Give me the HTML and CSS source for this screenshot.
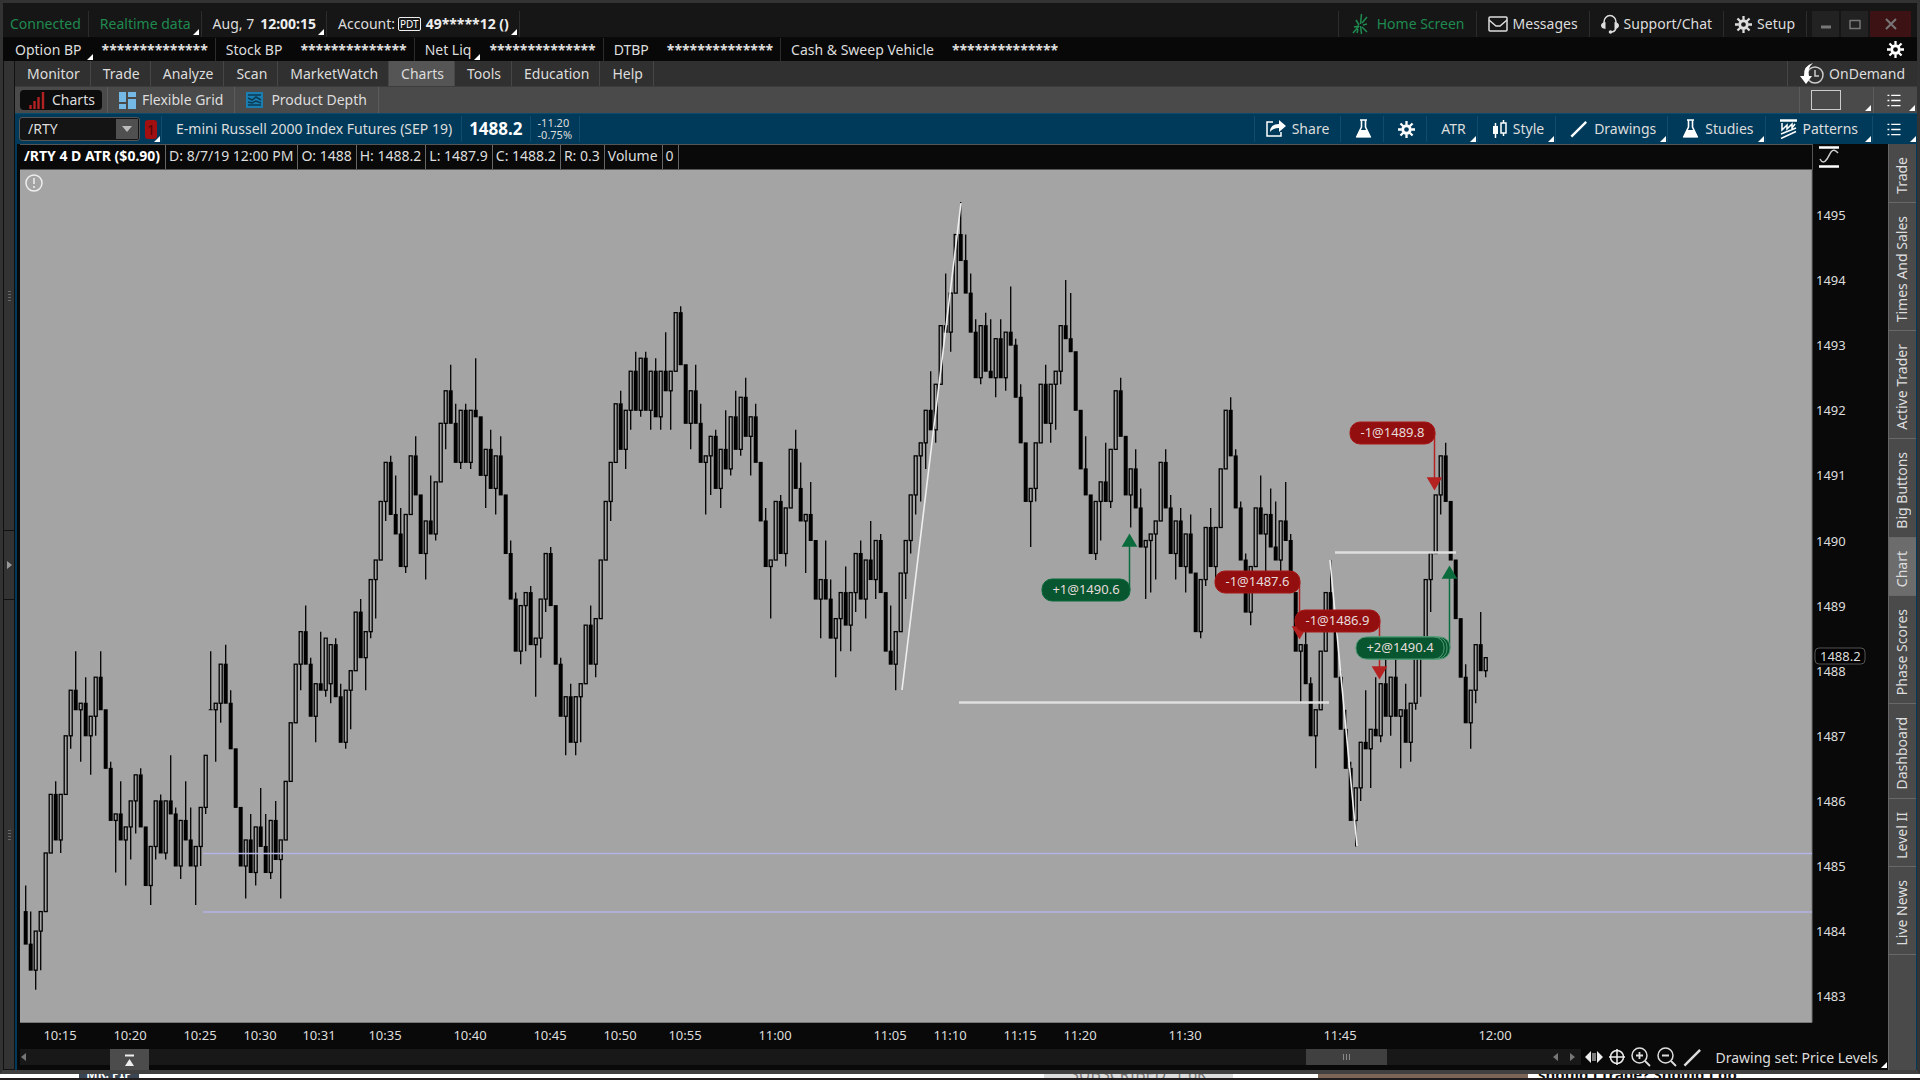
FILE: index.html
```html
<!DOCTYPE html>
<html lang="en">
<head>
    <meta charset="UTF-8">
    <meta name="viewport" content="width=device-width, initial-scale=1.0">
    <title>/RTY Charts</title>
    <link rel="stylesheet" href="styles.css">
</head>
<body>
    <svg class="sprite" aria-hidden="true">
        <symbol id="gear" viewBox="0 0 18 18">
            <circle cx="9" cy="9" r="4" fill="none" stroke="currentColor" stroke-width="3"/>
            <path d="M9 0v4M9 14v4M0 9h4M14 9h4M2.6 2.6l3 3M12.4 12.4l3 3M15.4 2.6l-3 3M5.6 12.4l-3 3" stroke="currentColor" stroke-width="2.4"/>
        </symbol>
        <symbol id="flask" viewBox="0 0 17 20">
            <path d="M5 1h7M6.5 1v7L2 17.5h13L10.5 8V1" fill="none" stroke="currentColor" stroke-width="1.6"/>
            <path d="M5 11h7l4 7.5H1z" fill="currentColor"/>
        </symbol>
        <symbol id="list" viewBox="0 0 14 14">
            <path d="M0 1.5h2M4 1.5h10M0 7h2M4 7h10M0 12.5h2M4 12.5h10" stroke="currentColor" stroke-width="1.5"/>
        </symbol>
        <symbol id="pencil" viewBox="0 0 20 20">
            <path d="M1.5 18.5L18 2" stroke="currentColor" stroke-width="2.6"/>
        </symbol>
    </svg>

    <div class="window">
        <header class="titlebar">
            <span class="status online">Connected</span>
            <button class="status online corner">Realtime data</button>
            <button class="status corner">Aug, 7 <b class="time">12:00:15</b></button>
            <button class="status corner">Account: <span class="pdt">PDT</span> <b>49*****12 ()</b></button>
            <nav class="window-links">
                <a href="#" class="link online">
                    <svg width="18" height="20" viewBox="0 0 18 20"><path d="M8.5 10L9.5 0M10 9l5-6M11 11l4-1M10 13l5 5M8.5 12l1 8M7 12l-6 7M7 11L4 6M7 12l-5 1M6 15l-1 4" stroke="currentColor" stroke-width="1.5"/></svg>
                    Home Screen
                </a>
                <a href="#" class="link">
                    <svg width="20" height="16" viewBox="0 0 20 16"><rect x="1" y="1" width="18" height="14" rx="1" fill="none" stroke="currentColor" stroke-width="1.5"/><path d="M1 4l7 6h4l7-6" fill="none" stroke="currentColor" stroke-width="1.5"/></svg>
                    Messages
                </a>
                <a href="#" class="link">
                    <svg width="18" height="20" viewBox="0 0 18 20"><path d="M3 14V8a6 6.5 0 0 1 12 0v6q-1 4-5 4" fill="none" stroke="currentColor" stroke-width="1.5"/><path d="M4.5 8v7Q0 14.5 0 11.5T4.5 8zM13.5 8v7q4.5-.5 4.5-3.5T13.5 8z" fill="currentColor"/><circle cx="9.5" cy="18" r="1.8" fill="currentColor"/></svg>
                    Support/Chat
                </a>
                <a href="#" class="link">
                    <svg width="17" height="17"><use href="#gear"/></svg>
                    Setup
                </a>
            </nav>
            <div class="window-buttons">
                <button aria-label="Minimize"><svg width="12" height="12" viewBox="0 0 12 12"><path d="M1 9h10" stroke="currentColor" stroke-width="3"/></svg></button>
                <button aria-label="Maximize"><svg width="12" height="12" viewBox="0 0 12 12"><path d="M1 2.5h10M1 2v8.500h10V2" fill="none" stroke="currentColor" stroke-width="1.5"/></svg></button>
                <button class="close" aria-label="Close"><svg width="12" height="12" viewBox="0 0 12 12"><path d="M1 1l10 10M11 1L1 11" stroke="currentColor" stroke-width="2"/></svg></button>
            </div>
        </header>

        <div class="balances">
            <div class="balance"><span class="corner label">Option BP</span><b>**************</b></div>
            <div class="balance"><span class="label">Stock BP</span><b>**************</b></div>
            <div class="balance"><span class="corner label">Net Liq</span><b>**************</b></div>
            <div class="balance"><span class="label">DTBP</span><b>**************</b></div>
            <div class="balance"><span class="label">Cash &amp; Sweep Vehicle</span><b>**************</b></div>
            <button class="balance-setup" aria-label="Account setup"><svg width="17" height="17"><use href="#gear"/></svg></button>
        </div>

        <div class="workspace">
            <aside class="gutter">
                <span class="grip"></span>
                <button aria-label="Show left panel"><svg width="5" height="8" viewBox="0 0 5 8"><path d="M0 0l5 4-5 4z" fill="#999"/></svg></button>
                <span class="grip"></span>
            </aside>

            <main class="main">
                <nav class="tabs">
                    <a href="#">Monitor</a>
                    <a href="#">Trade</a>
                    <a href="#">Analyze</a>
                    <a href="#">Scan</a>
                    <a href="#">MarketWatch</a>
                    <a href="#" class="active">Charts</a>
                    <a href="#">Tools</a>
                    <a href="#">Education</a>
                    <a href="#">Help</a>
                    <a href="#" class="ondemand">
                        <svg width="24" height="22" viewBox="0 0 24 22"><circle cx="15" cy="12" r="8" fill="none" stroke="#ccc" stroke-width="1.5"/><path d="M15 7v6h4" fill="none" stroke="#ccc" stroke-width="1.5"/><path d="M13 0Q3 3 4 13H0l6 8 6-8H9Q7 5 13 0z" fill="#fff"/></svg>
                        OnDemand
                    </a>
                </nav>

                <nav class="subtabs">
                    <a href="#" class="sub first">
                        <span class="pill-tab">
                            <svg width="17" height="17" viewBox="0 0 17 17"><path d="M1.5 17v-4M5.5 17V9M9.5 17V5M14 17V0" stroke="#b22222" stroke-width="2.4"/></svg>
                            Charts
                        </span>
                    </a>
                    <a href="#" class="sub">
                        <svg width="17" height="17" viewBox="0 0 17 17" fill="#74b9e6"><path d="M0 0h7v10H0zM0 12h7v5H0zM9 0h8v5H9zM9 7h8v10H9z"/></svg>
                        Flexible Grid
                    </a>
                    <a href="#" class="sub depth">
                        <svg width="17" height="16" viewBox="0 0 17 16"><path d="M0 0h17v16H0z" fill="#1a7fb0"/><path d="M2 3h13M2 6l4 2 4-3 5 3M2 10l4 1 4-2 5 2M2 13h13" fill="none" stroke="#0b3a55" stroke-width="1.5"/></svg>
                        Product Depth
                    </a>
                    <button class="sub grid-pick corner" aria-label="Grid layout"><span class="grid-box"></span></button>
                    <button class="sub menu corner" aria-label="Grid menu"><svg width="14" height="13"><use href="#list"/></svg></button>
                </nav>

                <div class="toolbar">
                    <div class="symbol">
                        <input type="text" value="/RTY" aria-label="Symbol">
                        <button aria-label="Symbol list"><svg width="10" height="6" viewBox="0 0 10 6"><path d="M0 0h10L5 6z" fill="#bbb"/></svg></button>
                    </div>
                    <button class="link-group corner" aria-label="Link group 1"><span>1</span></button>
                    <span class="cell name">E-mini Russell 2000 Index Futures (SEP 19)</span>
                    <b class="cell last">1488.2</b>
                    <span class="cell change"><span>-11.20</span><span>-0.75%</span></span>
                    <div class="tools">
                        <button class="tool share">
                            <svg width="20" height="18" viewBox="0 0 20 18"><path d="M7 2H1v14h14v-4" fill="none" stroke="currentColor" stroke-width="1.5"/><path d="M4 12q0-8 9-8V0l7 6-7 6V8Q7 8 4 12z" fill="currentColor"/></svg>
                            Share
                        </button>
                        <button class="tool" aria-label="Study editor"><svg width="17" height="20"><use href="#flask"/></svg></button>
                        <button class="tool" aria-label="Chart settings"><svg width="17" height="17"><use href="#gear"/></svg></button>
                        <button class="tool corner">ATR</button>
                        <button class="tool corner">
                            <svg width="15" height="18" viewBox="0 0 15 18"><path d="M3.5 3v15M11.5 0v3M11.5 13v3" stroke="currentColor" stroke-width="1.5"/><path d="M1 6h5v8H1z" fill="currentColor"/><rect x="9" y="3" width="5" height="10" fill="none" stroke="currentColor" stroke-width="1.5"/></svg>
                            Style
                        </button>
                        <button class="tool corner"><svg width="18" height="20"><use href="#pencil"/></svg>Drawings</button>
                        <button class="tool corner"><svg width="17" height="20"><use href="#flask"/></svg>Studies</button>
                        <button class="tool patterns corner">
                            <svg width="17" height="20" viewBox="0 0 17 20"><path d="M0 1.5h17" stroke="currentColor" stroke-width="2.5"/><path d="M2 4v7l5-5v4l5-5v4l3-4M1 15L16 9M1 19.500l15-7" fill="none" stroke="currentColor" stroke-width="1.5"/></svg>
                            Patterns
                        </button>
                        <button class="tool menu corner" aria-label="Chart menu"><svg width="14" height="13"><use href="#list"/></svg></button>
                    </div>
                </div>

                <div class="content">
                    <section class="chart-panel">
                        <div class="info-row">
                            <div class="info">
                                <b>/RTY 4 D ATR ($0.90)</b>
                                <span>D: 8/7/19 12:00 PM</span>
                                <span>O: 1488</span>
                                <span>H: 1488.2</span>
                                <span>L: 1487.9</span>
                                <span>C: 1488.2</span>
                                <span>R: 0.3</span>
                                <span>Volume</span>
                                <span>0</span>
                            </div>
                            <button class="scale-button" aria-label="Price scale">
                                <svg width="20" height="22" viewBox="0 0 20 22"><path d="M0 1.5h20M0 20.5h20" stroke="#fff" stroke-width="2.5"/><path d="M1 13q3 6 7 0l4-7q3-4 7 1" fill="none" stroke="#ccc" stroke-width="1.5"/></svg>
                            </button>
                        </div>
                        <svg id="chart" class="chart" viewBox="20 170 1868 879" preserveAspectRatio="xMinYMin meet" role="img" aria-label="/RTY range bars">
                            <rect x="20" y="170" width="1792" height="852" class="plot"/>
                            <path d="M1812 170v852.500H20" class="plot-border"/>
                            <g id="candles"></g>
                            <g class="levels"><path d="M203 853.500H1812M203 912H1812"/></g>
                            <g class="drawings">
                                <path d="M959 702.500h370M1335 552.500h121"/>
                                <path class="thin" d="M902 690L961 203M1330 560l27 286"/>
                            </g>
                            <g id="trades"></g>
                            <g class="notice"><circle cx="34" cy="183" r="8"/><path d="M34 178v6M34 186v2"/></g>
                            <g id="axes" class="axes"></g>
                            <rect x="1815" y="648" width="50" height="16" rx="4" class="last-box"/>
                            <text x="1820" y="661" class="axis-text">1488.2</text>
                        </svg>
                        <div class="bottom-bar">
                            <div class="scroll">
                                <svg width="5" height="8" viewBox="0 0 5 8"><path d="M5 0L0 4l5 4z" fill="#777"/></svg>
                                <button class="raise" aria-label="Show lower panel"><svg width="9" height="12" viewBox="0 0 9 12"><path d="M0 1.5h9" stroke="#eee" stroke-width="2"/><path d="M4.5 5L9 12H0z" fill="#eee"/></svg></button>
                                <div class="thumb"><i></i><i></i><i></i></div>
                                <svg width="5" height="8" viewBox="0 0 5 8"><path d="M5 0L0 4l5 4z" fill="#777"/></svg>
                                <svg class="right" width="5" height="8" viewBox="0 0 5 8"><path d="M0 0l5 4-5 4z" fill="#777"/></svg>
                            </div>
                            <button aria-label="Fit"><svg width="18" height="12" viewBox="0 0 18 12"><path d="M6 0v12L0 6zM12 0v12l6-6z" fill="#eee"/><path d="M8 2v8M10 2v8" stroke="#eee"/></svg></button>
                            <button aria-label="Crosshair"><svg width="16" height="16" viewBox="0 0 16 16"><circle cx="8" cy="8" r="6.5" fill="none" stroke="#eee" stroke-width="1.5"/><path d="M8 0v16M0 8h16" stroke="#eee" stroke-width="1.5"/></svg></button>
                            <button aria-label="Zoom in"><svg width="20" height="20" viewBox="0 0 20 20"><circle cx="8.5" cy="8.5" r="7.5" fill="none" stroke="#ddd" stroke-width="1.5"/><path d="M14 14l5 5M5 8.5h7M8.5 5v7" stroke="#ddd" stroke-width="1.8"/></svg></button>
                            <button aria-label="Zoom out"><svg width="20" height="20" viewBox="0 0 20 20"><circle cx="8.5" cy="8.5" r="7.5" fill="none" stroke="#ddd" stroke-width="1.5"/><path d="M14 14l5 5M5 8.5h7" stroke="#ddd" stroke-width="1.8"/></svg></button>
                            <button aria-label="Draw"><svg width="19" height="19"><use href="#pencil"/></svg></button>
                            <button class="drawing-set corner">Drawing set: Price Levels</button>
                        </div>
                    </section>

                    <nav class="side-tabs">
                        <a href="#"><span>Trade</span></a>
                        <a href="#"><span>Times And Sales</span></a>
                        <a href="#"><span>Active Trader</span></a>
                        <a href="#"><span>Big Buttons</span></a>
                        <a href="#" class="active"><span>Chart</span></a>
                        <a href="#"><span>Phase Scores</span></a>
                        <a href="#"><span>Dashboard</span></a>
                        <a href="#"><span>Level II</span></a>
                        <a href="#"><span>Live News</span></a>
                    </nav>
                </div>
            </main>
        </div>
    </div>

    <div class="behind">
        <span class="thumb-a">MR. PIP</span>
        <span class="subscribed">SUBSCRIBED&nbsp; 1.6K</span>
        <span class="thumb-b"></span>
        <span class="headline">should I trade? Should I do</span>
    </div>

    <script src="chart.js"></script>
</body>
</html>
```
FILE: styles.css
```css
* {
    box-sizing: border-box;
}
body {
    margin: 0;
    height: 100vh;
    display: flex;
    flex-direction: column;
    overflow: hidden;
    background: #211d1e;
    color: #ddd;
    font-family: "Noto Sans", "Open Sans", sans-serif;
    font-size: 14px;
    line-height: 20px;
    white-space: nowrap;
}
a {
    color: inherit;
    text-decoration: none;
}
button {
    padding: 0;
    border: 0;
    background: none;
    color: inherit;
    font: inherit;
    cursor: pointer;
}
svg {
    flex: none;
    display: block;
}
.sprite {
    position: absolute;
    width: 0;
    height: 0;
}
.corner {
    position: relative;
}
.corner::after {
    content: "";
    position: absolute;
    right: 2px;
    bottom: 2px;
    border: 3px solid #fff;
    border-top-color: transparent;
    border-left-color: transparent;
}
.online {
    color: #1f8a50;
}

.window {
    flex: 1;
    min-height: 0;
    display: flex;
    flex-direction: column;
    background: #161616;
    border: 3px solid #333;
    border-bottom: 4px solid #404040;
}

/* title bar */
.titlebar {
    display: flex;
    height: 35px;
    padding-top: 8px;
    padding-right: 6px;
    border-bottom: 1px solid #0a0a0a;
}
.status {
    display: flex;
    align-items: center;
    padding: 0 10px 0 11px;
    border-right: 1px solid #2c2c2c;
}
.status:first-child {
    padding: 0 7px;
}
.time {
    margin-left: 6px;
}
.pdt {
    margin: 0 5px 0 3px;
    padding: 0 1px;
    border: 1px solid #eee;
    border-radius: 2px;
    font-size: 10px;
    line-height: 12px;
    color: #fff;
}
.status b {
    color: #eee;
}
.window-links {
    display: flex;
    margin-left: auto;
    border-left: 1px solid #2c2c2c;
}
.link {
    display: flex;
    align-items: center;
    gap: 5px;
    padding: 0 11px;
    border-right: 1px solid #2c2c2c;
}
.link:first-child {
    gap: 7px;
    padding-left: 13px;
}
.window-buttons {
    display: flex;
    height: 26px;
    gap: 2px;
    margin-left: 5px;
    color: #777;
}
.window-buttons button {
    width: 27px;
    display: grid;
    place-items: center;
    background: #222;
}
.window-buttons .close {
    width: 41px;
    background: #3c1214;
}

/* balances */
.balances {
    display: flex;
    height: 23px;
    background: #080808;
}
.balance {
    display: flex;
    align-items: center;
    padding: 0 7px 0 10px;
    border-right: 1px solid #2c2c2c;
}
.balance:first-child {
    padding-left: 12px;
}
.balance:nth-child(5) {
    border-right: 0;
}
.label {
    padding-right: 18px;
}
.balance:first-child .label {
    padding-right: 20px;
}
.label.corner::after {
    right: 9px;
    bottom: 0;
}
.balance-setup {
    margin-left: auto;
    padding-right: 13px;
    color: #fff;
}

.workspace {
    flex: 1;
    min-height: 0;
    display: flex;
}
.gutter {
    width: 12px;
    display: flex;
    flex-direction: column;
    align-items: center;
    background: #333;
    border: 1px solid #111;
    border-top: 0;
}
.gutter button {
    width: 100%;
    height: 70px;
    display: grid;
    place-items: center;
    border: solid #111;
    border-width: 1px 0;
}
.grip {
    flex: 1;
    display: flex;
    align-items: center;
}
.grip::before {
    content: "";
    width: 3px;
    height: 10px;
    background: repeating-linear-gradient(#666 0 1px, transparent 1px 3px);
}
.main {
    flex: 1;
    min-width: 0;
    display: flex;
    flex-direction: column;
}

/* main tabs */
.tabs {
    display: flex;
    height: 26px;
    background: #303030;
    border-bottom: 1px solid #3c3c3c;
}
.tabs a {
    display: flex;
    align-items: center;
    padding: 0 10px 0 12px;
    border-right: 1px solid #464646;
}
.tabs .active {
    background: #555;
}
.tabs .ondemand {
    gap: 5px;
    margin-left: auto;
    padding-right: 12px;
    border-left: 1px solid #464646;
    border-right: 0;
}
.subtabs {
    display: flex;
    height: 26px;
    background: #4a4a4a;
}
.sub {
    display: flex;
    align-items: center;
    gap: 6px;
    padding: 0 11px;
    border-right: 1px solid #5c5c5c;
}
.sub.first {
    padding: 0 5px;
}
.sub.depth {
    gap: 8px;
}
.pill-tab {
    display: flex;
    align-items: center;
    gap: 6px;
    height: 20px;
    padding: 0 7px 0 9px;
    border-radius: 4px;
    background: #0c0c0c;
}
.sub.grid-pick {
    width: 75px;
    margin-left: auto;
    border-left: 1px solid #5c5c5c;
}
.grid-box {
    width: 30px;
    height: 20px;
    border: 1px solid #ccc;
}
.sub.menu {
    width: 43px;
    padding-left: 13px;
    border-right: 0;
}

/* symbol toolbar */
.toolbar {
    display: flex;
    height: 31px;
    padding: 2px 0;
    background: #003a5a;
    border-top: 1px solid #0a4a6c;
}
.symbol {
    display: flex;
    width: 121px;
    margin: 1px 5px 1px 4px;
    background: #141414;
    border: 1px solid #555;
    border-radius: 3px;
}
.symbol input {
    flex: 1;
    min-width: 0;
    padding: 0 0 0 8px;
    border: 0;
    background: none;
    color: #ddd;
    font: inherit;
    font-size: 14px;
}
.symbol button {
    width: 22px;
    display: grid;
    place-items: center;
    margin: 1px;
    background: #505050;
}
.link-group {
    width: 17px;
    border-right: 1px solid #114c6e;
}
.link-group span {
    display: block;
    width: 12px;
    height: 19px;
    border-radius: 3px;
    background: #a01010;
    color: #4c0606;
    line-height: 19px;
}
.link-group.corner::after,
.tool.corner::after {
    right: 1px;
    bottom: 0;
}
.cell {
    display: flex;
    align-items: center;
    padding: 0 7px;
    border-right: 1px solid #114c6e;
}
.name {
    padding: 0 9px 0 14px;
}
.last {
    font-size: 17px;
    color: #fff;
}
.change {
    flex-direction: column;
    align-items: flex-start;
    justify-content: center;
    font-size: 11px;
    line-height: 12px;
}
.tools {
    display: flex;
    margin-left: auto;
    border-left: 1px solid #114c6e;
}
.tool {
    display: flex;
    align-items: center;
    gap: 6px;
    padding: 0 11px 0 14px;
    border-right: 1px solid #114c6e;
}
.tool.share {
    padding: 0 11px;
}
.tool.patterns {
    padding-right: 14px;
}
.tool.menu {
    width: 44px;
    border-right: 0;
}
.tool svg,
.menu svg {
    color: #fff;
}

/* chart */
.content {
    flex: 1;
    min-height: 0;
    display: flex;
    border: solid #003a5a;
    border-width: 0 1px 0 2px;
}
.chart-panel {
    flex: 1;
    min-width: 0;
    display: flex;
    flex-direction: column;
    padding-left: 3px;
    background: #090909;
}
.info-row {
    display: flex;
    justify-content: space-between;
    height: 26px;
}
.info {
    flex: 1;
    display: flex;
    border: 1px solid #555;
    border-left: 0;
}
.info > * {
    padding: 1px 4px 0 3px;
    border-right: 1px solid #666;
}
.info b {
    padding: 1px 5px 0 4px;
    color: #fff;
}
.scale-button {
    width: 75px;
    padding-left: 6px;
}
.chart {
    flex: 1;
    width: 100%;
    min-height: 0;
}
.plot {
    fill: #a4a4a4;
}
.plot-border {
    fill: none;
    stroke: #777;
}
.up,
.wick {
    fill: none;
    stroke: #000;
    stroke-width: 1.3;
}
.levels {
    stroke: #b3b3e6;
    stroke-width: 1.5;
}
.drawings {
    fill: none;
    stroke: #dedede;
    stroke-width: 2.5;
}
.drawings .thin {
    stroke: #eee;
    stroke-width: 1.6;
}
.notice {
    fill: none;
    stroke: #eee;
    stroke-width: 1.5;
}
.axis-text,
.axes text {
    fill: #ddd;
    font-size: 13px;
}
.time-label {
    text-anchor: middle;
}
.last-box {
    fill: #000;
    stroke: #555;
}
.buy {
    fill: #07562f;
    stroke: #0b6b3c;
}
.sell {
    fill: #930f0f;
    stroke: #a81616;
}
.buy.stacked {
    stroke: #4d9a74;
}
.arrow {
    stroke-width: 1.5;
}
.arrow.buy {
    fill: #0b6b3c;
}
.arrow.sell {
    fill: #b52222;
    stroke: #b52222;
}
.trade-text {
    fill: #e6dcdc;
    font-size: 13px;
    text-anchor: middle;
}

/* bottom bar */
.bottom-bar {
    display: flex;
    align-items: flex-start;
    height: 21px;
}
.bottom-bar button {
    height: 16px;
    display: flex;
    align-items: center;
    margin-left: 6px;
}
.scroll {
    flex: 1;
    display: flex;
    align-items: center;
    height: 16px;
    margin-right: -2px;
    padding: 0 6px 0 1px;
    background: #181818;
}
.scroll .raise {
    align-self: flex-start;
    width: 39px;
    height: 21px;
    justify-content: center;
    margin-left: 84px;
    background: #4c4c4c;
}
.thumb {
    display: flex;
    align-items: center;
    justify-content: center;
    gap: 2px;
    width: 81px;
    height: 16px;
    margin-left: auto;
    margin-right: 166px;
    background: #404040;
}
.thumb i {
    width: 1px;
    height: 6px;
    background: #888;
}
.scroll .right {
    margin-left: 12px;
}
.bottom-bar .drawing-set {
    height: 21px;
    margin-left: 13px;
    padding: 0 10px 4px 0;
}
.drawing-set.corner::after {
    right: 1px;
}

/* side tabs */
.side-tabs {
    width: 28px;
    display: flex;
    flex-direction: column;
    background: #4a4a4a;
    border-left: 1px solid #666;
}
.side-tabs a {
    display: flex;
    justify-content: center;
    padding: 13px 2px 8px 0;
    border-bottom: 1px solid #686868;
}
.side-tabs .active {
    background: #6c6c6c;
}
.side-tabs span {
    writing-mode: vertical-rl;
    transform: rotate(180deg);
}

/* browser window showing under the platform */
.behind {
    display: flex;
    align-items: flex-end;
    height: 6px;
    overflow: hidden;
    background: #fff;
    border-bottom: 2px solid #211d1e;
    color: #111;
    line-height: 12px;
}
.behind span {
    height: 10px;
}
.thumb-a {
    width: 60px;
    margin-left: 79px;
    background: #3a4654;
    color: #fff;
    font-size: 12px;
    font-weight: bold;
    text-align: center;
}
.subscribed {
    width: 189px;
    margin-left: auto;
    background: #ddd;
    color: #777;
    font-size: 16px;
    text-align: center;
}
.thumb-b {
    width: 210px;
    margin-left: 85px;
    background: #7c6556;
}
.headline {
    width: 392px;
    padding-left: 10px;
    font-size: 15px;
    font-weight: bold;
}
```
FILE: chart.js
```js
const SVG = "http://www.w3.org/2000/svg";

// closes of the range bars, in ticks of 0.1 above 1480; [open, close] where a bar gaps
const FIRST_OPEN = 43;
const RANGE = 9;
const bars = [
    38, 34, 40, 43, 52, 61, 54, 61, 70, 77, 74, 75, 70, 73, 79, 74, 65, 57, 58, 54,
    56, 60, 64, 56, 47, 53, 60, 52, 60, 58, 50, 57, 54, 50, 53, 59, 67, [74, 74], 75, 81,
    75, 68, 59, 50, 54, 49, 56, 53, 49, 57, 51, 54, 63, 72, 81, 86, 81, 73, 78, 77,
    85, [78, 84], 76, 69, 77, 80, 89, 82, 86, 94, 97, 106, 112, 104, 101, 96, 104, 113, 107, 98,
    103, 101, 109, 118, 123, 118, 112, 120, 112, 120, 119, 110, 114, 108, 113, 107, 98, 91, 83, 90,
    92, 84, 85, 91, 98, 90, 81, 73, 76, 69, 76, 78, 87, 81, 88, 97, 106, 112, 121, 114,
    120, 126, 120, 128, 120, 126, 119, 126, 123, 126, 135, 127, 118, 123, 118, 112, 113, 116, 108, 114,
    111, 119, 114, 122, 116, 119, 112, 103, 96, 97, 106, 98, 105, 114, 108, 103, 104, 100, 91, 94,
    91, 85, 88, 92, 87, 92, 98, 91, 97, 94, 100, 92, 83, 81, 86, 95, 100, 107, 113, 115,
    120, 117, 124, 133, 132, 138, 147, 143, 138, 132, 125, 133, 126, 125, 131, 125, 132, 130, 122, 115,
    106, 108, 115, 124, 118, 124, 126, 133, 131, 129, 120, 111, 107, 98, 106, 109, 106, 114, 123, 116,
    107, 111, 105, 99, 100, 101, 103, 112, 105, 98, 103, 96, 101, 95, 86, 94, 102, 96, 102, 111,
    120, 113, 105, 97, 89, 96, 105, 101, 104, 99, 97, 103, 100, 92, 83, 84, 78, 70, 74, 83,
    92, 88, 79, 71, 65, 57, 62, 69, 68, 71, 70, 78, 73, 79, 73, 74, 69, 75, 83, 85,
    94, 98, 107, 113, 106, 97, 88, 79, 72, 77, 84, 80, 82
];

const times = [
    ["10:15", 60], ["10:20", 130], ["10:25", 200], ["10:30", 260], ["10:31", 319], ["10:35", 385],
    ["10:40", 470], ["10:45", 550], ["10:50", 620], ["10:55", 685], ["11:00", 775], ["11:05", 890],
    ["11:10", 950], ["11:15", 1020], ["11:20", 1080], ["11:30", 1185], ["11:45", 1340], ["12:00", 1495]
];

// x is the arrow, y the top of the label, tip the point of the arrow
const trades = [
    { side: "buy", text: "+1@1490.6", x: 1129, y: 579, tip: 535, width: 88 },
    { side: "sell", text: "-1@1487.6", x: 1299, y: 571, tip: 638, width: 85 },
    { side: "sell", text: "-1@1486.9", x: 1379, y: 610, tip: 678, width: 85 },
    { side: "buy", text: "+2@1490.4", x: 1449, y: 637, tip: 567, width: 88, stack: 3 },
    { side: "sell", text: "-1@1489.8", x: 1434, y: 422, tip: 489, width: 85 }
];

function add(parent, name, attrs, text) {
    const el = document.createElementNS(SVG, name);
    for (const key in attrs) el.setAttribute(key, attrs[key]);
    if (text) el.textContent = text;
    parent.appendChild(el);
    return el;
}

function tickY(tick) {
    return 215 + (150 - tick) * 6.51;
}

function drawCandles() {
    const group = document.querySelector("#candles");
    let open = FIRST_OPEN;
    bars.forEach((bar, i) => {
        let close = bar;
        if (Array.isArray(bar)) [open, close] = bar;
        const x = 25.7 + i * 5;
        const up = close > open;
        // the last bar is still forming
        const reach = i === bars.length - 1 ? 3 : RANGE;
        const high = tickY(up ? close : close + reach);
        const low = tickY(up ? close - reach : close);
        const top = tickY(Math.max(open, close));
        const bottom = tickY(Math.min(open, close));
        if (up) {
            add(group, "path", { class: "wick", d: `M${x} ${bottom}V${low}` });
            add(group, "rect", { class: "up", x: x - 1.5, y: top, width: 3, height: bottom - top });
        } else {
            add(group, "path", { class: "wick", d: `M${x} ${high}V${top}` });
            add(group, "rect", { x: x - 2, y: top - 0.5, width: 4, height: bottom - top + 1 });
        }
        open = close;
    });
}

function drawTrades() {
    const group = document.querySelector("#trades");
    trades.forEach(t => {
        const base = t.side === "buy" ? t.tip + 11 : t.tip - 11;
        const stack = t.stack || 1;
        const box = stack > 1 ? `${t.side} stacked` : t.side;
        add(group, "path", { class: `arrow ${t.side}`, d: `M${t.x + 0.5} ${t.y + 11}V${base}` });
        add(group, "path", { class: `arrow ${t.side}`, d: `M${t.x - 6} ${base}h13L${t.x + 0.5} ${t.tip}z` });
        for (let i = 0; i < stack; i++) {
            const right = t.x + 1 - i * 3;
            add(group, "rect", { class: box, x: right - t.width, y: t.y, width: t.width, height: 22, rx: 10 });
        }
        const left = t.x + 1 - t.width - (stack - 1) * 3;
        add(group, "text", { class: "trade-text", x: left + t.width / 2, y: t.y + 15 }, t.text);
    });
}

function drawAxes() {
    const group = document.querySelector("#axes");
    for (let price = 1495; price >= 1483; price--) {
        add(group, "text", { x: 1816, y: Math.round(tickY((price - 1480) * 10)) + 5 }, String(price));
    }
    times.forEach(([label, x]) => {
        add(group, "text", { class: "time-label", x: x, y: 1040 }, label);
    });
}

drawCandles();
drawTrades();
drawAxes();
```
